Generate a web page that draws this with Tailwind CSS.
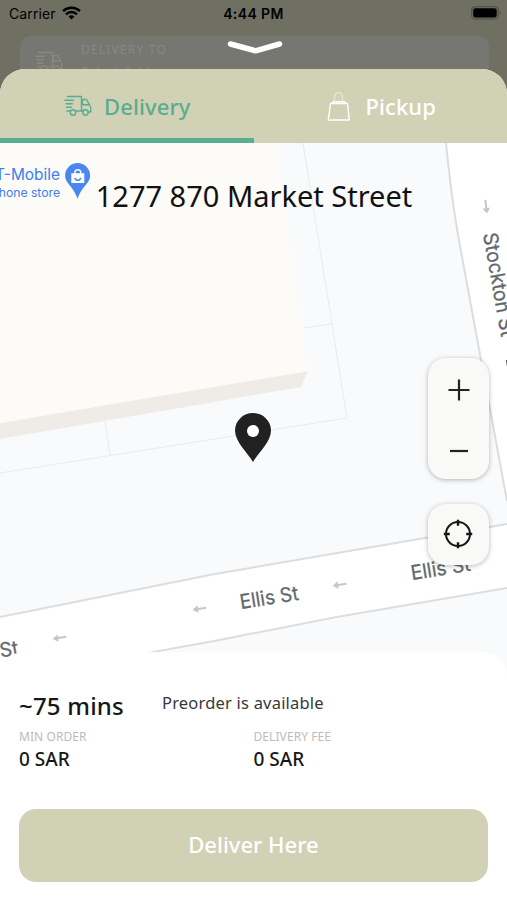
<!DOCTYPE html>
<html lang="en">
<head>
<meta charset="utf-8">
<meta name="viewport" content="width=device-width, initial-scale=1">
<title>Delivery location</title>
<script src="https://cdn.jsdelivr.net/npm/@tailwindcss/browser@4"></script>
</head>
<body class="bg-[#6f7062]">
<svg class="hidden">
  <symbol id="truck" viewBox="0 0 28 22">
    <g fill="none" stroke="currentColor" stroke-width="1.4" stroke-linecap="round" stroke-linejoin="round">
      <path d="M3.500 1.500h14v14.500H11.500M1 5.200h8.500M2 8.700h6.500M2.500 12.300h5M3 16h3.500M17.500 4.500h5L26.700 12v5H24.500M17.500 16h1M18.500 4.500v5.200h6.800"/>
      <circle cx="9" cy="17.500" r="2.700"/><circle cx="21.500" cy="17.500" r="2.700"/>
    </g>
  </symbol>
  <symbol id="heading" viewBox="0 0 14 8">
    <path d="M14 3H5.500V.2L0 4l5.500 3.800V5H14z" fill="#c4c5d3"/>
  </symbol>
</svg>
<main class="relative flex h-[900px] w-[507px] flex-col overflow-hidden bg-[#6f7062] font-['Noto_Sans',sans-serif]">
  <header class="grid h-[36px] shrink-0 grid-cols-3 items-center px-[9px] pb-[9px] font-['Inter',sans-serif] text-[14px] leading-none text-black">
    <div class="flex items-center gap-[6px]">
      <span class="tracking-[0.100px]">Carrier</span>
      <svg class="mt-[-2px] h-[14px] w-[19px]" viewBox="0 0 19 14"><g fill="none" stroke="#000" stroke-width="2.400"><path d="M1.100 5.200a12 12 0 0 1 16.800 0"/><path d="M4 8.300a7.800 7.800 0 0 1 11 0"/></g><path d="M6.500 10.600a4.300 4.300 0 0 1 6 0l-3 3z"/></svg>
    </div>
    <div class="text-center font-semibold tracking-[0.400px] whitespace-nowrap">4:44 PM</div>
    <svg class="mt-[-1px] mr-[-4px] h-[14px] w-[31px] justify-self-end" viewBox="0 0 31 14"><rect x=".7" y=".7" width="26.500" height="12.300" rx="3.600" fill="none" stroke="#4c4d43" stroke-width="1.100"/><rect x="2.200" y="2.200" width="23.500" height="9.300" rx="2.200"/><path d="M28.500 4.700q2.200 2.100 0 4.200z" fill="#4c4d43"/></svg>
  </header>

  <div class="mr-[18px] ml-[20px] flex h-[63px] shrink-0 items-start rounded-t-[10px] bg-[#767770] text-[#878880]">
    <svg class="mt-[15px] ml-[14px] h-[22px] w-[30px]"><use href="#truck"/></svg>
    <div class="ml-[17px] flex flex-col pt-[6px] text-[12px] leading-[16px]">
      <span class="tracking-[1.200px]">DELIVERY TO</span>
      <span class="mt-[6px] text-[14px]">Select Address</span>
    </div>
  </div>
  <svg class="absolute top-[38px] left-[225px] h-[18px] w-[60px]" viewBox="0 0 60 18"><path d="M5.500 6 30.500 12.800 54.500 6" fill="none" stroke="#fff" stroke-width="5.500" stroke-linecap="round" stroke-linejoin="round"/></svg>

  <section class="relative -mt-[30px] flex flex-1 flex-col overflow-hidden rounded-t-[25px] bg-white">
    <nav class="grid h-[74px] shrink-0 grid-cols-2 bg-[#d1d1b5] text-[22px] leading-[30px] font-medium">
      <div class="flex h-[74px] items-center border-b-[5px] border-[#5aac92] pt-[5px] pl-[64px] text-[#5aac92]">
        <svg class="h-[22px] w-[28px]"><use href="#truck"/></svg>
        <span class="mt-[-1px] ml-[12px] tracking-[0.100px]">Delivery</span>
      </div>
      <div class="flex items-center pl-[73px] text-white">
        <svg class="mt-[1px] h-[32px] w-[24px]" viewBox="0 0 24 32"><path d="M7.500 11V6.500C7.500 0 15.500 0 15.500 6.500V11" fill="none" stroke="#e9e8ca" stroke-width="1.300"/><path d="M3.500 12.500h17L22.300 29H1.300zM5 12.300l1-1.600h11.500l1 1.600" fill="none" stroke="#fff" stroke-width="1.500" stroke-linejoin="round"/></svg>
        <span class="mt-[-1px] ml-[15px] tracking-[0.100px]">Pickup</span>
      </div>
    </nav>

    <div class="relative h-[509px] shrink-0">
      <svg class="block h-[537px] w-[507px]" viewBox="0 143 507 537">
        <rect y="143" width="507" height="537" fill="#f8fafc"/>
        <path d="M446 143Q451 194 458 235L507 501V143z" fill="#fff"/>
        <path d="M446 143Q451 194 458 235L507 501" fill="none" stroke="#dcdddf" stroke-width="2"/>
        <path d="M0 617 215 574 507 524V588L214 641 130 659 0 682z" fill="#fff"/>
        <path d="M0 617 215 574 507 524M507 588 337 617 214 641 148 653" fill="none" stroke="#dcdddf" stroke-width="2"/>
        <path d="M303 143 347 418 0 473M304 328 332 324M105 420 110 455" fill="none" stroke="#e8eaec"/>
        <path d="M0 423 308 371 301 387 0 439z" fill="#efebe6"/>
        <path d="M0 143H277L308 371 0 423z" fill="#fcfbf7"/>
        <g font-family="Inter, sans-serif" fill="#3b7ff0">
          <text x="60" y="180" font-size="15.500" text-anchor="end" textLength="65" lengthAdjust="spacingAndGlyphs">T-Mobile</text>
          <text x="60" y="197" font-size="12" text-anchor="end" textLength="69" lengthAdjust="spacingAndGlyphs">Phone store</text>
        </g>
        <path d="M77.600 163a12.500 12.500 0 0 1 12.500 12.500c0 8-8 10-12.500 23.500-4.500-13.500-12.500-15.500-12.500-23.500A12.500 12.500 0 0 1 77.600 163z" fill="#4b87f0"/>
        <path d="M71.300 173.200h13v9.800h-13z" fill="#fff"/>
        <path d="M74.800 174v-1.300a3 3 0 0 1 6 0V174" fill="none" stroke="#fff" stroke-width="1.400"/>
        <path d="M74.500 178q3.300 4.800 6.600 0" fill="none" stroke="#4b87f0" stroke-width="1.400"/>
        <g font-family="Inter, sans-serif" font-size="20" fill="#62686c" stroke="#62686c" stroke-width=".3">
          <text transform="translate(241 609) rotate(-9)" textLength="59" lengthAdjust="spacingAndGlyphs">Ellis St</text>
          <text transform="translate(412 580) rotate(-9)" textLength="60" lengthAdjust="spacingAndGlyphs">Ellis St</text>
          <text transform="translate(-40 664) rotate(-9)" textLength="60" lengthAdjust="spacingAndGlyphs">Ellis St</text>
          <text transform="translate(483 234) rotate(80)" textLength="105" lengthAdjust="spacingAndGlyphs">Stockton St</text>
          <path d="M506.500 360 507.500 366" stroke-width="1.500"/>
        </g>
        <use href="#heading" width="14" height="8" transform="translate(192 606) rotate(-9)"/>
        <use href="#heading" width="14" height="8" transform="translate(332 582) rotate(-9)"/>
        <use href="#heading" width="14" height="8" transform="translate(52 635) rotate(-9)"/>
        <use href="#heading" width="14" height="8" transform="translate(483 214) rotate(-97)"/>
        <path d="M253 462C248 453 235 442 235 430.500a18 17.500 0 0 1 36 0C271 442 258 453 253 462z" fill="#212121"/>
        <circle cx="253" cy="431" r="6" fill="#fff"/>
      </svg>
      <h1 class="absolute top-[33px] left-0 w-full pl-[1px] text-center text-[29px] leading-[40px] whitespace-nowrap text-[#111]">1277 870 Market Street</h1>
      <div class="absolute top-[215px] right-[18px] flex flex-col gap-[25px]">
        <div class="flex h-[121px] w-[61px] flex-col items-center justify-between rounded-[18px] bg-[#f9f9f8] py-[20px] shadow-[0_1px_5px_rgba(0,0,0,0.28)]">
          <svg class="h-[24px] w-[24px]" viewBox="0 0 24 24"><path d="M1.500 12h21M12 1.500v21" stroke="#222" stroke-width="2.200"/></svg>
          <svg class="h-[16px] w-[24px]" viewBox="0 0 24 16"><path d="M3 8h18" stroke="#222" stroke-width="2.200"/></svg>
        </div>
        <div class="flex h-[61px] w-[61px] items-center justify-center rounded-[18px] bg-[#f9f9f8] pr-[2px] pb-[1px] shadow-[0_1px_5px_rgba(0,0,0,0.28)]">
          <svg class="h-[30px] w-[30px]" viewBox="0 0 30 30"><g fill="none" stroke="#171717"><circle cx="15" cy="15" r="12" stroke-width="2"/><path d="M15 .8v6M15 23.200v6M.8 15h6M23.200 15h6" stroke-width="2.400"/></g></svg>
        </div>
      </div>
    </div>

    <div class="relative flex flex-1 flex-col rounded-t-[24px] bg-white px-[19px] pt-[36px]">
      <div class="flex items-start">
        <strong class="w-[143px] text-[24px] leading-[36px] font-medium tracking-[0.200px] whitespace-nowrap text-[#171717]">~75 mins</strong>
        <span class="text-[16.500px] leading-[29px] tracking-[0.200px] whitespace-nowrap text-[#383838]">Preorder is available</span>
      </div>
      <div class="mt-[5px] grid grid-cols-2">
        <div class="flex flex-col">
          <span class="text-[12px] leading-[16px] tracking-[0.080px] text-[#bcbcbc]">MIN ORDER</span>
          <span class="mt-[2px] text-[19px] leading-[24px] font-medium text-[#171717]">0 SAR</span>
        </div>
        <div class="flex flex-col">
          <span class="text-[12px] leading-[16px] tracking-[0.080px] text-[#bcbcbc]">DELIVERY FEE</span>
          <span class="mt-[2px] text-[19px] leading-[24px] font-medium text-[#171717]">0 SAR</span>
        </div>
      </div>
      <button class="mt-[38px] h-[73px] w-[469px] rounded-[17px] bg-[#d1d1b5] pb-[3px] text-[22px] font-medium text-white">Deliver Here</button>
    </div>
  </section>
</main>
</body>
</html>
